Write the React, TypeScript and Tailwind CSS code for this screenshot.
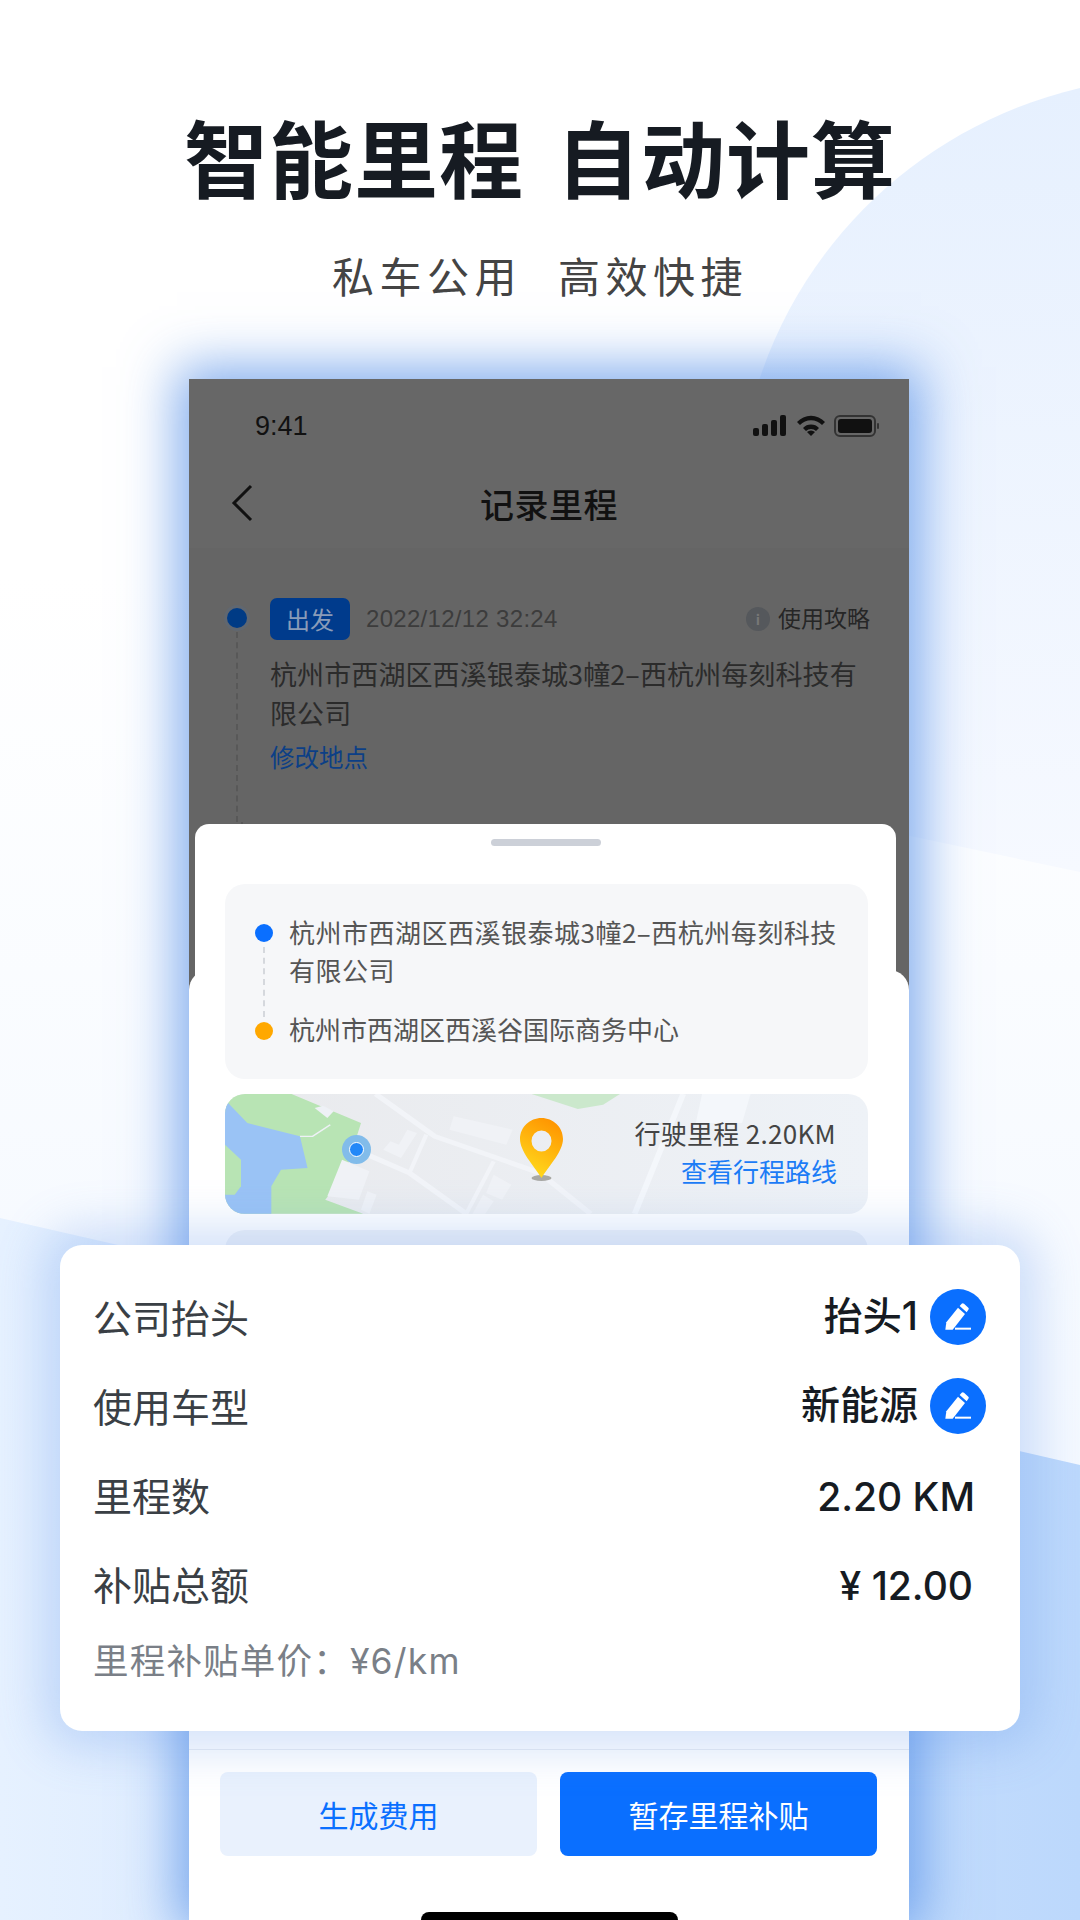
const cjk = "font-['Noto_Sans_CJK_SC','Noto_Sans',sans-serif]";
const mixed = "font-['Inter','Noto_Sans_CJK_SC',sans-serif]";

function Pencil() {
  return (
    <svg className="shrink-0" width="56" height="56" viewBox="30 28 168 168">
      <circle cx="114" cy="112" r="84" fill="#0a6fff" />
      <path d="M76 150L79 128L114 84L135 103L98 150Z" fill="white" />
      <path d="M119 79L125 72Q128 69 132 72L145 84Q148 87 145 90L140 98Z" fill="white" />
      <rect x="105" y="144" width="48" height="6" fill="white" />
    </svg>
  );
}

function Row({ label, children }: { label: string; children: React.ReactNode }) {
  return (
    <div className="h-[89px] flex items-center justify-between">
      <span className={`${cjk} text-[39px] text-[#3a3f45]`}>{label}</span>
      {children}
    </div>
  );
}

function MapCard() {
  return (
    <div className="relative h-[120px] w-[643px] mt-[15px] ml-[30px] flex justify-end pt-[20px] pr-[30px] rounded-[20px] overflow-hidden bg-gradient-to-r from-[#e9eaed] to-[#eef2f7]">
      <svg className="absolute inset-0 w-full h-full" viewBox="12 13 1527 360" preserveAspectRatio="none">
        <path d="M12 13H170L335 100L295 260L250 330L340 372H12Z" fill="#b8e4b4" />
        <path d="M12 30L65 100L190 140L208 235L145 240L122 290V372H12Z" fill="#9ac3f5" />
        <path d="M12 165L50 210V290L35 315H12Z" fill="#b8e4b4" />
        <path d="M740 13H950L910 45L850 58Z" fill="#cbe8cc" />
        <path d="M225 55L245 48L270 65L255 85Z" fill="#eef1f6" />
        <path d="M190 140H220L262 105" fill="none" stroke="#eef1f6" strokeWidth="4" />
        <path d="M370 13L510 140L760 250L880 372" fill="none" stroke="#f2f4f8" strokeWidth="14" />
        <path d="M350 195L450 250L585 372" fill="none" stroke="#f2f4f8" strokeWidth="14" />
        <path d="M490 135L450 250" fill="none" stroke="#f2f4f8" strokeWidth="10" />
        <path d="M650 215L585 372" fill="none" stroke="#f2f4f8" strokeWidth="10" />
        <path d="M1100 13L985 372" fill="none" stroke="#f4f7fb" strokeWidth="14" />
        <path d="M555 80L695 120L680 165L545 120Z" fill="#f0f2f6" />
        <path d="M445 120L468 130L430 205L388 180L405 155L425 165Z" fill="#f0f2f6" />
        <path d="M290 210L355 245L330 330L255 320Z" fill="#f0f2f6" />
        <path d="M350 305L372 315L355 372L335 360Z" fill="#f0f2f6" />
        <path d="M650 255L692 285L670 330L632 310Z" fill="#f0f2f6" />
        <path d="M625 315L650 335L630 372H600Z" fill="#f0f2f6" />
        <path d="M1145 13H1260L1240 100H1130Z" fill="#f4f7fb" />
      </svg>
      <span className="absolute left-[117px] top-[41px] w-[29px] h-[29px] rounded-full bg-[#82bcea] flex items-center justify-center">
        <span className="w-[15px] h-[15px] rounded-full bg-[#2388f8] border border-white" />
      </span>
      <svg className="absolute left-[295px] top-[24px]" width="43" height="66" viewBox="0 0 43 66">
        <defs>
          <linearGradient id="pin" x1="0.7" y1="0" x2="0.3" y2="1">
            <stop offset="0" stopColor="#ff9400" />
            <stop offset="1" stopColor="#ffdc1e" />
          </linearGradient>
        </defs>
        <ellipse cx="21.5" cy="60" rx="10" ry="3" fill="#a8a8a4" />
        <path fillRule="evenodd" d="M21.500 0C33 0 43 9 43 21C43 33 30 47 21.500 60C13 47 0 33 0 21C0 9 10 0 21.500 0ZM21.500 12.500A10 10.500 0 1 0 21.501 33.500A10 10.500 0 1 0 21.500 12.500Z" fill="url(#pin)" />
      </svg>
      <div className="relative text-right leading-[38px]">
        <div className="text-[26px] tracking-[0.3px] mr-[2px] text-[#444]">行驶里程 2.20KM</div>
        <div className="text-[26px] mr-[1px] text-[#1c7cf6]">查看行程路线</div>
      </div>
    </div>
  );
}

export default function App() {
  return (
    <div className={`${cjk} relative w-[1080px] h-[1920px] overflow-hidden bg-gradient-to-b from-white from-30% to-[#eef5ff]`}>
      <svg className="absolute inset-0" width="1080" height="1920" viewBox="0 0 1080 1920">
        <defs>
          <linearGradient id="ball" x1="0" y1="0" x2="0" y2="1">
            <stop offset="0" stopColor="#e6f0fe" />
            <stop offset="1" stopColor="#f6f9ff" />
          </linearGradient>
          <linearGradient id="floor" x1="0" y1="0" x2="1" y2="0">
            <stop offset="0" stopColor="#e6f1ff" />
            <stop offset="1" stopColor="#bcd8fc" />
          </linearGradient>
        </defs>
        <path d="M1080 88C900 130 760 280 740 470L740 800L1080 872Z" fill="url(#ball)" />
        <path d="M0 1218L1080 1465V1920H0Z" fill="url(#floor)" />
      </svg>

      <div className="relative flex flex-col items-center">
        <h1 className="mt-[107px] h-[98px] text-[84px] leading-[98px] font-bold tracking-[1px] [word-spacing:12px] whitespace-pre text-[#161b22]">智能里程 自动计算</h1>
        <p className="mt-[40px] h-[60px] text-[42px] leading-[60px] tracking-[5.500px] [word-spacing:3px] whitespace-pre text-[#444]">私车公用  高效快捷</p>

        <div className="relative w-[720px] h-[1541px] mt-[74px] ml-[18px] bg-[#656565] shadow-[0_0_50px_12px_rgba(80,140,230,0.72)]">
          <div className="h-[169px] bg-[#676767]">
            <div className="flex items-center justify-between pl-[66px] pr-[28px] pt-[29px]">
              <span className="text-[27px] leading-[36px] text-[#111] font-['Liberation_Sans',sans-serif]">9:41</span>
              <svg width="128" height="24" viewBox="0 0 128 24" fill="#111">
                <rect x="0" y="14" width="6" height="8" rx="2" />
                <rect x="9" y="10" width="6" height="12" rx="2" />
                <rect x="18" y="6" width="6" height="16" rx="2" />
                <rect x="27" y="1" width="6" height="21" rx="2" />
                <path d="M44 8a19 19 0 0 1 28 0l-3 3a15 15 0 0 0-22 0zM50 14a11 11 0 0 1 16 0l-3 3a7 7 0 0 0-10 0zM58 22l-4-4a6 6 0 0 1 8 0z" />
                <rect x="82" y="2" width="40" height="20" rx="5" fill="none" stroke="#333" strokeWidth="2" />
                <rect x="85" y="5" width="34" height="14" rx="3" />
                <rect x="124" y="9" width="2" height="6" rx="1" fill="#333" />
              </svg>
            </div>
            <div className="grid grid-cols-[1fr_auto_1fr] items-center h-[70px] mt-[24px]">
              <svg className="ml-[42px]" width="22" height="38" viewBox="0 0 22 38" fill="none" stroke="#111" strokeWidth="3">
                <path d="M20 2L3 19L20 36" />
              </svg>
              <span className="text-[34px] font-medium text-[#111] tracking-[0.5px]">记录里程</span>
            </div>
          </div>

          <div className="flex gap-[23px] pl-[38px] pr-[38px] pt-[50px]">
            <div className="w-5 shrink-0 flex flex-col items-center pt-[10px]">
              <span className="w-5 h-5 rounded-full bg-[#003b85] shadow-[0_0_0_3px_#606770]" />
              <div className="mt-[4px] h-[190px] border-l-2 border-dashed border-[#585858]" />
              <div className="ml-[10px] h-[14px] border-l-2 border-dashed border-[#585858]" />
            </div>
            <div className="flex-1">
              <div className="flex items-center">
                <span className="w-[80px] h-[42px] rounded-[7px] bg-[#003b8c] flex items-center justify-center text-[24px] text-[#8a9cb8]">出发</span>
                <span className="ml-[16px] text-[24px] text-[#3c3c3c] font-['Liberation_Sans',sans-serif] tracking-[0.3px]">2022/12/12 32:24</span>
                <span className="ml-auto w-6 h-6 rounded-full bg-[#55585c] flex items-center justify-center text-[14px] text-[#777] font-bold">i</span>
                <span className="pb-[4px] ml-[8px] mr-[1px] text-[23px] text-[#262626]">使用攻略</span>
              </div>
              <div className="mt-[15px] text-[27px] tracking-[0.1px] leading-[38.500px] text-[#2b2b2b]">杭州市西湖区西溪银泰城3幢2–西杭州每刻科技有<br />限公司</div>
              <div className="mt-[6px] text-[24.500px] leading-[38px] text-[#0c3f86]">修改地点</div>
            </div>
          </div>

          <div className="absolute inset-x-0 top-[591px] bottom-0 bg-white rounded-t-[20px]" />

          <div className="absolute left-[6px] w-[701px] top-[445px] bottom-0 flex flex-col bg-white rounded-t-[14px]">
            <div className="w-[110px] h-[7px] mx-auto mt-[15px] rounded-full bg-[#ccd0d8]" />
            <div className="flex gap-[16px] ml-[30px] w-[643px] mt-[38px] h-[195px] rounded-[20px] bg-[#f6f7f9] pt-[29px] pl-[30px] text-[26px] leading-[38px] text-[#555]">
              <div className="w-[18px] shrink-0 flex flex-col items-center pt-[11px]">
                <span className="w-[18px] h-[18px] rounded-full bg-[#0a6fff]" />
                <div className="my-[5px] h-[70px] border-l-2 border-dashed border-[#d5d8dd]" />
                <span className="w-[18px] h-[18px] rounded-full bg-[#ffa800]" />
              </div>
              <div>
                <div className="tracking-[0.5px]">杭州市西湖区西溪银泰城3幢2–西杭州每刻科技<br />有限公司</div>
                <div className="mt-[21px]">杭州市西湖区西溪谷国际商务中心</div>
              </div>
            </div>
            <MapCard />
            <div className="ml-[30px] w-[643px] mt-[16px] h-[100px] rounded-[20px] bg-[#f0f3f8]" />

            <div className="mt-[419px] -ml-[6px] w-[720px] h-px bg-[#e9edf3]" />
            <div className="mt-[22px] ml-[25px] w-[657px] flex gap-[23px]">
              <button className="flex-1 h-[84px] rounded-[8px] bg-[#e9f1fd] text-[30px] text-[#0a6fff]">生成费用</button>
              <button className="flex-1 h-[84px] rounded-[8px] bg-[#0a6fff] text-[30px] text-white">暂存里程补贴</button>
            </div>
            <div className="mt-auto ml-[226px] w-[257px] h-2 rounded-t-full bg-black" />
          </div>
        </div>
      </div>

      <div className={`${mixed} absolute left-[60px] top-[1245px] w-[960px] h-[486px] rounded-[22px] bg-white shadow-[0_0_45px_18px_rgba(100,150,235,0.28)] pl-[33px] pr-[34px] pt-[27px]`}>
        <Row label="公司抬头">
          <div className="flex items-center gap-[12px]">
            <span className="text-[39px] font-medium text-[#161b22]">抬头1</span>
            <Pencil />
          </div>
        </Row>
        <Row label="使用车型">
          <div className="flex items-center gap-[12px]">
            <span className="text-[39px] font-medium text-[#161b22]">新能源</span>
            <Pencil />
          </div>
        </Row>
        <Row label="里程数">
          <span className="pt-[6px] mr-[11px] text-[39px] font-medium text-[#161b22]">2.20 KM</span>
        </Row>
        <Row label="补贴总额">
          <span className="pt-[6px] mr-[13px] text-[39px] font-medium text-[#161b22]">¥ 12.00</span>
        </Row>
        <div className="mt-[9px] text-[35.500px] tracking-[1.200px] leading-[50px] text-[#7a7f87]">里程补贴单价：¥6/km</div>
      </div>
    </div>
  );
}
